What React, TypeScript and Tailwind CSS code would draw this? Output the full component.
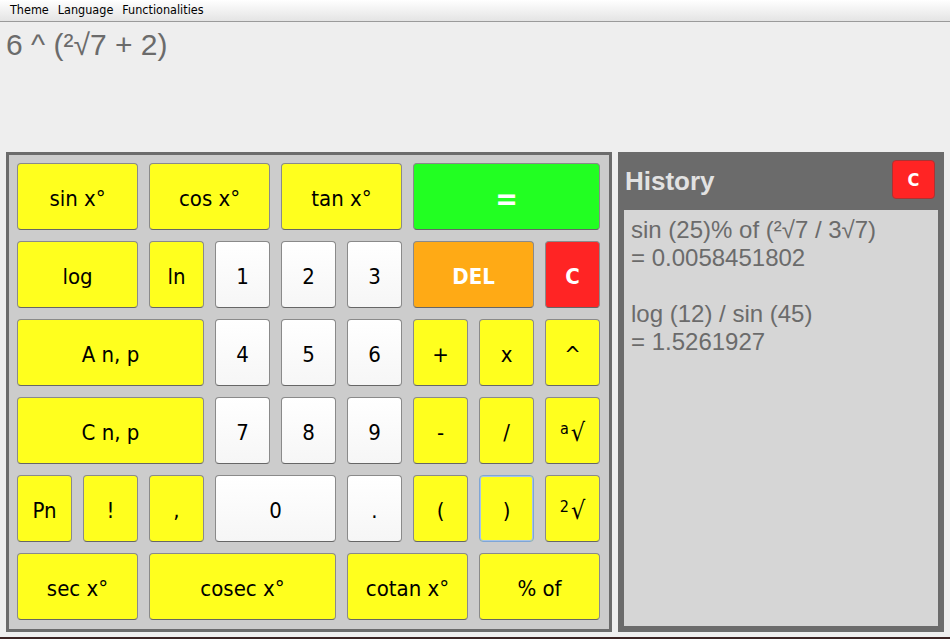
import React from 'react'

type Key = {
  label: React.ReactNode
  span?: string
  tone?: 'yellow' | 'white' | 'green' | 'orange' | 'red'
  focus?: boolean
}

const TONES = {
  yellow: 'bg-[#ffff1e] text-black',
  white: 'bg-gradient-to-b from-white to-[#f6f6f6] text-black',
  green: 'bg-[#22ff22] text-white font-bold',
  orange: 'bg-[#ffaa15] text-white font-bold',
  red: 'bg-[#ff2424] text-white font-bold',
}

const Root = ({ idx }: { idx: string }) => (
  <span className="inline-flex items-start">
    <span className="text-[16px] leading-none mt-[1px] mr-[2px]">{idx}</span>
    <span className="text-[25px] leading-none">√</span>
  </span>
)

const KEYS: Key[] = [
  { label: 'sin x°', span: 'col-span-2' },
  { label: 'cos x°', span: 'col-span-2' },
  { label: 'tan x°', span: 'col-span-2' },
  { label: <span className="text-[30px]">=</span>, span: 'col-span-3', tone: 'green' },

  { label: 'log', span: 'col-span-2' },
  { label: 'ln' },
  { label: '1', tone: 'white' },
  { label: '2', tone: 'white' },
  { label: '3', tone: 'white' },
  { label: 'DEL', span: 'col-span-2', tone: 'orange' },
  { label: 'C', tone: 'red' },

  { label: 'A n, p', span: 'col-span-3' },
  { label: '4', tone: 'white' },
  { label: '5', tone: 'white' },
  { label: '6', tone: 'white' },
  { label: '+' },
  { label: 'x' },
  { label: '^' },

  { label: 'C n, p', span: 'col-span-3' },
  { label: '7', tone: 'white' },
  { label: '8', tone: 'white' },
  { label: '9', tone: 'white' },
  { label: '-' },
  { label: '/' },
  { label: <Root idx="a" /> },

  { label: 'Pn' },
  { label: '!' },
  { label: ',' },
  { label: '0', span: 'col-span-2', tone: 'white' },
  { label: '.', tone: 'white' },
  { label: '(' },
  { label: ')', focus: true },
  { label: <Root idx="2" /> },

  { label: 'sec x°', span: 'col-span-2' },
  { label: 'cosec x°', span: 'col-span-3' },
  { label: 'cotan x°', span: 'col-span-2' },
  { label: '% of', span: 'col-span-2' },
]

const HISTORY = [
  'sin (25)% of (²√7 / 3√7)',
  '= 0.0058451802',
  '',
  'log (12) / sin (45)',
  '= 1.5261927',
]

export default function App() {
  const uiFont = { fontFamily: '"DejaVu Sans Condensed", "DejaVu Sans", sans-serif', fontStretch: 'condensed' as const }
  const textFont = { fontFamily: '"Liberation Sans", Arial, sans-serif' }

  return (
    <div className="w-[950px] h-[639px] bg-[#eeeeee] flex flex-col overflow-hidden">
      {/* Menu bar */}
      <div
        className="h-[22px] shrink-0 flex items-center gap-[9px] px-[10px] text-[12.5px] text-black bg-gradient-to-b from-white to-[#e4e4e4] border-b border-[#9a9a9a]"
        style={uiFont}
      >
        <span>Theme</span>
        <span>Language</span>
        <span>Functionalities</span>
      </div>

      {/* Expression display */}
      <div className="h-[130px] shrink-0 px-[6px] pt-[5px]">
        <div className="text-[30px] leading-[36px] text-[#6b6b6b]" style={textFont}>
          6 ^ (²√7 + 2)
        </div>
      </div>

      {/* Main area */}
      <div className="flex gap-[6px] px-[6px] h-[480px] shrink-0">
        {/* Keypad */}
        <div className="w-[606px] border-[3px] border-[#6b6b6b] bg-[#cccccc] pl-[8px] pt-[8px]">
          <div className="grid grid-cols-[repeat(9,55px)] grid-rows-[repeat(6,67px)] gap-[11px]" style={uiFont}>
            {KEYS.map((k, i) => (
              <button
                key={i}
                className={`${k.span ?? ''} ${TONES[k.tone ?? 'yellow']} flex items-center justify-center pt-[4px] rounded-[4px] border ${
                  k.focus ? 'border-[#7fa6d6] ring-1 ring-inset ring-[#a9c4e6]' : 'border-[#8a8a8a] border-b-[#666666]'
                } text-[22px] leading-none`}
              >
                {k.label}
              </button>
            ))}
          </div>
        </div>

        {/* History */}
        <div className="w-[326px] bg-[#6b6b6b] flex flex-col px-[6px] pb-[6px]">
          <div className="h-[58px] shrink-0 flex items-center justify-between pl-[1px] pr-[3px]">
            <span className="text-[26px] font-bold text-[#e2e2e2]" style={textFont}>History</span>
            <button
              className="w-[43px] h-[39px] mb-[3px] rounded-[4px] bg-[#ff2424] border border-[#a33] text-white font-bold text-[18px] flex items-center justify-center"
              style={uiFont}
            >
              C
            </button>
          </div>
          <div className="flex-1 bg-[#d6d6d6] px-[7px] pt-[6px]" style={textFont}>
            {HISTORY.map((line, i) => (
              <div key={i} className="h-[28px] text-[24px] leading-[28px] text-[#6b6b6b] whitespace-pre">
                {line}
              </div>
            ))}
          </div>
        </div>
      </div>

      <div className="flex-1" />
      <div className="h-[2px] shrink-0 bg-[#3b2424]" />
    </div>
  )
}
